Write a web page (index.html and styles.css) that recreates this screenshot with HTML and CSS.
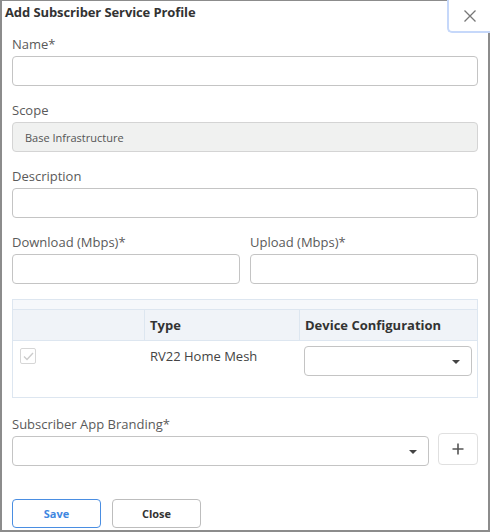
FILE: index.html
```html
<!DOCTYPE html>
<html>
<head>
<meta charset="utf-8">
<link rel="stylesheet" href="styles.css">
</head>
<body>
<div class="modal">
  <div class="header">
    <div class="title">Add Subscriber Service Profile</div>
    <button class="close-x" aria-label="Close">
      <svg width="14" height="14" viewBox="0 0 14 14"><path d="M1.5 1.5 L12.5 12.5 M12.5 1.5 L1.5 12.5" stroke="#777" stroke-width="1.3" fill="none"/></svg>
    </button>
  </div>
  <div class="body">
    <div class="field">
      <label class="lbl">Name*</label>
      <div class="input"></div>
    </div>
    <div class="field">
      <label class="lbl">Scope</label>
      <div class="input disabled">Base Infrastructure</div>
    </div>
    <div class="field">
      <label class="lbl">Description</label>
      <div class="input"></div>
    </div>
    <div class="row2">
      <div class="field">
        <label class="lbl">Download (Mbps)*</label>
        <div class="input"></div>
      </div>
      <div class="field">
        <label class="lbl">Upload (Mbps)*</label>
        <div class="input"></div>
      </div>
    </div>
    <div class="table">
      <div class="strip"></div>
      <div class="thead">
        <div class="c1"></div>
        <div class="c2">Type</div>
        <div class="c3">Device Configuration</div>
      </div>
      <div class="trow">
        <div class="c1"><span class="chk"><svg width="11" height="9" viewBox="0 0 11 9"><path d="M1 4.5 L4 7.5 L10 1" stroke="#ccc" stroke-width="1.4" fill="none"/></svg></span></div>
        <div class="c2">RV22 Home Mesh</div>
        <div class="c3"><div class="select small"><span class="caret"></span></div></div>
      </div>
    </div>
    <div class="field brand">
      <label class="lbl">Subscriber App Branding*</label>
      <div class="brand-row">
        <div class="select"><span class="caret"></span></div>
        <button class="plus">
          <svg width="12" height="12" viewBox="0 0 12 12"><path d="M6 0.5 V11.5 M0.5 6 H11.5" stroke="#555" stroke-width="1.6" fill="none"/></svg>
        </button>
      </div>
    </div>
  </div>
  <div class="footer">
    <button class="btn save">Save</button>
    <button class="btn close">Close</button>
  </div>
</div>
</body>
</html>
```
FILE: styles.css
```css
* { box-sizing: border-box; }
html, body { margin: 0; padding: 0; background: #fff; }
body { font-family: "Open Sans", Lato, sans-serif; color: #555; }
.modal {
  width: 490px; height: 532px;
  border-left: 2px solid #8c8c8c;
  border-top: 1px solid #8c8c8c;
  border-right: 2px solid #8c8c8c;
  border-bottom: 2px solid #8c8c8c;
  background: #fff;
  position: relative;
  display: flex; flex-direction: column;
}
.header { height: 33px; display: flex; justify-content: space-between; align-items: flex-start; }
.title { font-size: 13px; font-weight: 700; color: #333; padding: 2px 0 0 3px; letter-spacing: -0.1px; }
.close-x {
  width: 43px; height: 33px; margin: -1px -2px 0 0;
  background: #fff; border: 2px solid #c6d8fa; border-top: none; border-right: none;
  border-bottom-left-radius: 5px;
  display: flex; align-items: center; justify-content: center; padding: 0;
}
.body { padding: 2px 10px 0 10px; display: flex; flex-direction: column; }
.field { display: flex; flex-direction: column; margin-bottom: 16px; }
.lbl { font-size: 13px; color: #5a5a5a; line-height: 16px; margin-bottom: 4px; }
.input {
  height: 30px; border: 1px solid #c4c4c4; border-radius: 4px; background: #fff;
  font-size: 11px; color: #555; padding: 0 12px; display: flex; align-items: center;
}
.input.disabled { background: #f0f1f0; border-color: #d4d4d4; }
.row2 { display: grid; grid-template-columns: 228px 228px; gap: 10px; }
.row2 .field { margin-bottom: 15px; }
.table { border: 1px solid #dde6f0; height: 99px; margin-bottom: 18px; }
.strip { height: 10px; background: #f6f8fb; border-bottom: 1px solid #dde6f0; }
.thead { display: grid; grid-template-columns: 131px 155px 1fr; height: 31px; background: #f0f3f8; border-bottom: 1px solid #dde6f0; }
.thead > div { font-size: 13px; font-weight: 700; color: #333; display: flex; align-items: center; padding-left: 5px; }
.thead .c2, .thead .c3 { border-left: 1px solid #dde6f0; }
.trow { display: grid; grid-template-columns: 131px 155px 1fr; }
.trow .c1 { padding: 7px 0 0 7px; }
.trow .c2 { font-size: 13px; color: #444; padding: 6px 0 0 6px; }
.trow .c3 { padding: 5px 5px 0 5px; }
.chk { width: 16px; height: 16px; border: 1px solid #d6d6d6; border-radius: 2px; display: flex; align-items: center; justify-content: center; background: #fff; }
.select {
  height: 30px; border: 1px solid #c4c4c4; border-radius: 4px; background: #fff;
  position: relative; flex: 1;
}
.caret { position: absolute; right: 11px; top: 13px; width: 0; height: 0;
  border-left: 4px solid transparent; border-right: 4px solid transparent; border-top: 4px solid #444; }
.brand { margin-bottom: 0; }
.brand-row { display: flex; align-items: flex-start; gap: 9px; }
.plus {
  width: 40px; height: 32px; border: 1px solid #e0e0e0; border-radius: 4px; background: #fff;
  display: flex; align-items: center; justify-content: center; padding: 0; margin-top: -3px;
}
.footer { margin-top: auto; padding: 0 0 2px 10px; display: flex; gap: 11px; }
.btn {
  width: 89px; height: 29px; border-radius: 4px; background: #fff;
  font-family: "Open Sans", Lato, sans-serif; font-size: 11px; font-weight: 700; padding: 0;
}
.btn.save { border: 1px solid #4a8ee2; color: #3f87e0; }
.btn.close { border: 1px solid #bdbdbd; color: #333; }
```
